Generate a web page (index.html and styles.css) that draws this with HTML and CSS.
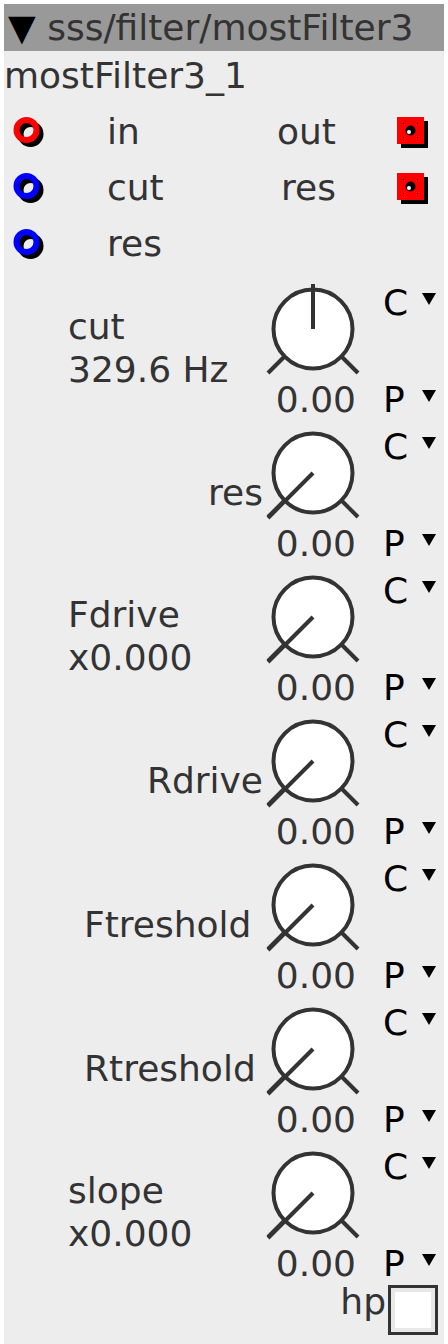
FILE: index.html
```html
<!DOCTYPE html>
<html lang="en">
<head>
    <meta charset="UTF-8">
    <meta name="viewport" content="width=device-width, initial-scale=1.0">
    <title>mostFilter3</title>
    <link rel="stylesheet" href="styles.css">
</head>
<body>
    <div class="panel">
        <div class="header">▼ sss/filter/mostFilter3</div>
        <div class="title">mostFilter3_1</div>

        <!-- inlets / outlets -->
        <div class="port-row">
            <svg class="inlet" width="103" height="56"><circle cx="26.5" cy="30" r="10" fill="none" stroke="#000" stroke-width="6"/><circle cx="22.5" cy="26" r="10" fill="none" stroke="#f00" stroke-width="6"/></svg>
            <span class="port-in">in</span>
            <span class="port-out">out</span>
            <svg class="outlet" width="108" height="56"><rect x="65" y="17" width="27" height="27" fill="#000"/><rect x="61" y="13" width="27" height="27" fill="#f00"/><circle cx="74.5" cy="26.5" r="5" fill="#000"/><circle cx="73" cy="28" r="2" fill="#fff"/><g fill="#000"><rect x="67" y="19" width="1" height="1"/><rect x="81" y="19" width="1" height="1"/><rect x="67" y="33" width="1" height="1"/><rect x="81" y="33" width="1" height="1"/></g></svg>
        </div>
        <div class="port-row">
            <svg class="inlet" width="103" height="56"><circle cx="26.5" cy="30" r="10" fill="none" stroke="#000" stroke-width="6"/><circle cx="22.5" cy="26" r="10" fill="none" stroke="#00f" stroke-width="6"/></svg>
            <span class="port-in">cut</span>
            <span class="port-out">res</span>
            <svg class="outlet" width="108" height="56"><rect x="65" y="17" width="27" height="27" fill="#000"/><rect x="61" y="13" width="27" height="27" fill="#f00"/><circle cx="74.5" cy="26.5" r="5" fill="#000"/><circle cx="73" cy="28" r="2" fill="#fff"/><g fill="#000"><rect x="67" y="19" width="1" height="1"/><rect x="81" y="19" width="1" height="1"/><rect x="67" y="33" width="1" height="1"/><rect x="81" y="33" width="1" height="1"/></g></svg>
        </div>
        <div class="port-row">
            <svg class="inlet" width="103" height="56"><circle cx="26.5" cy="30" r="10" fill="none" stroke="#000" stroke-width="6"/><circle cx="22.5" cy="26" r="10" fill="none" stroke="#00f" stroke-width="6"/></svg>
            <span class="port-in">res</span>
            <span class="port-out"></span>
            <span class="outlet"></span>
        </div>

        <!-- knobs -->
        <div class="knob-row">
            <div class="label">cut<br>329.6 Hz</div>
            <div class="knob">
                <svg width="100" height="96"><line x1="5" y1="91" x2="28" y2="68"/><line x1="95" y1="91" x2="72" y2="68"/><circle cx="50" cy="47" r="39.5"/><line x1="50" y1="47" x2="50" y2="2"/></svg>
                <div class="value">0.00</div>
            </div>
            <div class="cp">
                <div class="cp-item"><span>C</span><i class="tri"></i></div>
                <div class="cp-item p"><span>P</span><i class="tri"></i></div>
            </div>
        </div>
        <div class="knob-row">
            <div class="label single">res</div>
            <div class="knob">
                <svg width="100" height="96"><line x1="5" y1="91" x2="28" y2="68"/><line x1="95" y1="91" x2="72" y2="68"/><circle cx="50" cy="47" r="39.5"/><line x1="50" y1="47" x2="5" y2="92"/></svg>
                <div class="value">0.00</div>
            </div>
            <div class="cp">
                <div class="cp-item"><span>C</span><i class="tri"></i></div>
                <div class="cp-item p"><span>P</span><i class="tri"></i></div>
            </div>
        </div>
        <div class="knob-row">
            <div class="label">Fdrive<br>x0.000</div>
            <div class="knob">
                <svg width="100" height="96"><line x1="5" y1="91" x2="28" y2="68"/><line x1="95" y1="91" x2="72" y2="68"/><circle cx="50" cy="47" r="39.5"/><line x1="50" y1="47" x2="5" y2="92"/></svg>
                <div class="value">0.00</div>
            </div>
            <div class="cp">
                <div class="cp-item"><span>C</span><i class="tri"></i></div>
                <div class="cp-item p"><span>P</span><i class="tri"></i></div>
            </div>
        </div>
        <div class="knob-row">
            <div class="label single">Rdrive</div>
            <div class="knob">
                <svg width="100" height="96"><line x1="5" y1="91" x2="28" y2="68"/><line x1="95" y1="91" x2="72" y2="68"/><circle cx="50" cy="47" r="39.5"/><line x1="50" y1="47" x2="5" y2="92"/></svg>
                <div class="value">0.00</div>
            </div>
            <div class="cp">
                <div class="cp-item"><span>C</span><i class="tri"></i></div>
                <div class="cp-item p"><span>P</span><i class="tri"></i></div>
            </div>
        </div>
        <div class="knob-row">
            <div class="label single wide">Ftreshold</div>
            <div class="knob">
                <svg width="100" height="96"><line x1="5" y1="91" x2="28" y2="68"/><line x1="95" y1="91" x2="72" y2="68"/><circle cx="50" cy="47" r="39.5"/><line x1="50" y1="47" x2="5" y2="92"/></svg>
                <div class="value">0.00</div>
            </div>
            <div class="cp">
                <div class="cp-item"><span>C</span><i class="tri"></i></div>
                <div class="cp-item p"><span>P</span><i class="tri"></i></div>
            </div>
        </div>
        <div class="knob-row">
            <div class="label single wide">Rtreshold</div>
            <div class="knob">
                <svg width="100" height="96"><line x1="5" y1="91" x2="28" y2="68"/><line x1="95" y1="91" x2="72" y2="68"/><circle cx="50" cy="47" r="39.5"/><line x1="50" y1="47" x2="5" y2="92"/></svg>
                <div class="value">0.00</div>
            </div>
            <div class="cp">
                <div class="cp-item"><span>C</span><i class="tri"></i></div>
                <div class="cp-item p"><span>P</span><i class="tri"></i></div>
            </div>
        </div>
        <div class="knob-row">
            <div class="label">slope<br>x0.000</div>
            <div class="knob">
                <svg width="100" height="96"><line x1="5" y1="91" x2="28" y2="68"/><line x1="95" y1="91" x2="72" y2="68"/><circle cx="50" cy="47" r="39.5"/><line x1="50" y1="47" x2="5" y2="92"/></svg>
                <div class="value">0.00</div>
            </div>
            <div class="cp">
                <div class="cp-item"><span>C</span><i class="tri"></i></div>
                <div class="cp-item p"><span>P</span><i class="tri"></i></div>
            </div>
        </div>

        <div class="hp-row">
            <span class="hp-label">hp</span>
            <span class="checkbox"></span>
        </div>
    </div>
</body>
</html>
```

FILE: styles.css
```css
body {
    margin: 0;
    background: #fff;
    font-family: "DejaVu Sans", sans-serif;
    font-size: 36px;
    color: #333;
}
.panel {
    margin: 4px 4px 0 4px;
    width: 440px;
    background: #ededed;
    min-height: 1340px;
}
.header {
    height: 47px;
    line-height: 47px;
    background: #999;
    padding-left: 4px;
    white-space: nowrap;
    overflow: hidden;
}
.header::first-letter {
    color: #000;
}
.title {
    line-height: 50px;
    padding-bottom: 3px;
}

/* inlets / outlets */
.port-row {
    display: grid;
    grid-template-columns: 103px 1fr auto 108px;
    height: 56px;
    line-height: 56px;
}
.inlet, .outlet {
    display: block;
}

/* knobs */
.knob-row {
    display: flex;
    height: 144px;
}
.label {
    flex: 1;
    display: flex;
    flex-direction: column;
    justify-content: center;
    padding: 8px 0 0 64px;
    line-height: 43px;
    white-space: nowrap;
}
.label.single {
    text-align: right;
    padding-left: 0;
}
.label.wide {
    text-align: left;
    padding-left: 80px;
}
.knob {
    width: 100px;
}
.knob svg {
    display: block;
    margin-top: 10px;
}
.knob svg line, .knob svg circle {
    stroke: #333;
    stroke-width: 4;
}
.knob svg circle {
    fill: #fff;
}
.value {
    margin-top: 2px;
    line-height: 40px;
    text-align: right;
    padding-right: 7px;
}
.cp {
    width: 81px;
    padding: 11px 8px 0 20px;
    box-sizing: border-box;
    color: #000;
}
.cp-item {
    display: flex;
    justify-content: space-between;
    align-items: flex-start;
    line-height: 40px;
}
.cp-item.p {
    margin-top: 57px;
}
.tri {
    margin-top: 10px;
    width: 0;
    height: 0;
    border-left: 7px solid transparent;
    border-right: 7px solid transparent;
    border-top: 12px solid #000;
}

/* checkbox */
.hp-row {
    display: flex;
    justify-content: flex-end;
    align-items: flex-start;
    padding-right: 6px;
}
.hp-label {
    line-height: 40px;
    margin-top: 2px;
    margin-right: 2px;
}
.checkbox {
    margin-top: 5px;
    width: 44px;
    height: 44px;
    border: 3px solid #333;
    background: #fff;
    box-shadow: inset 0 0 0 4px #e8e8e8;
}
```
